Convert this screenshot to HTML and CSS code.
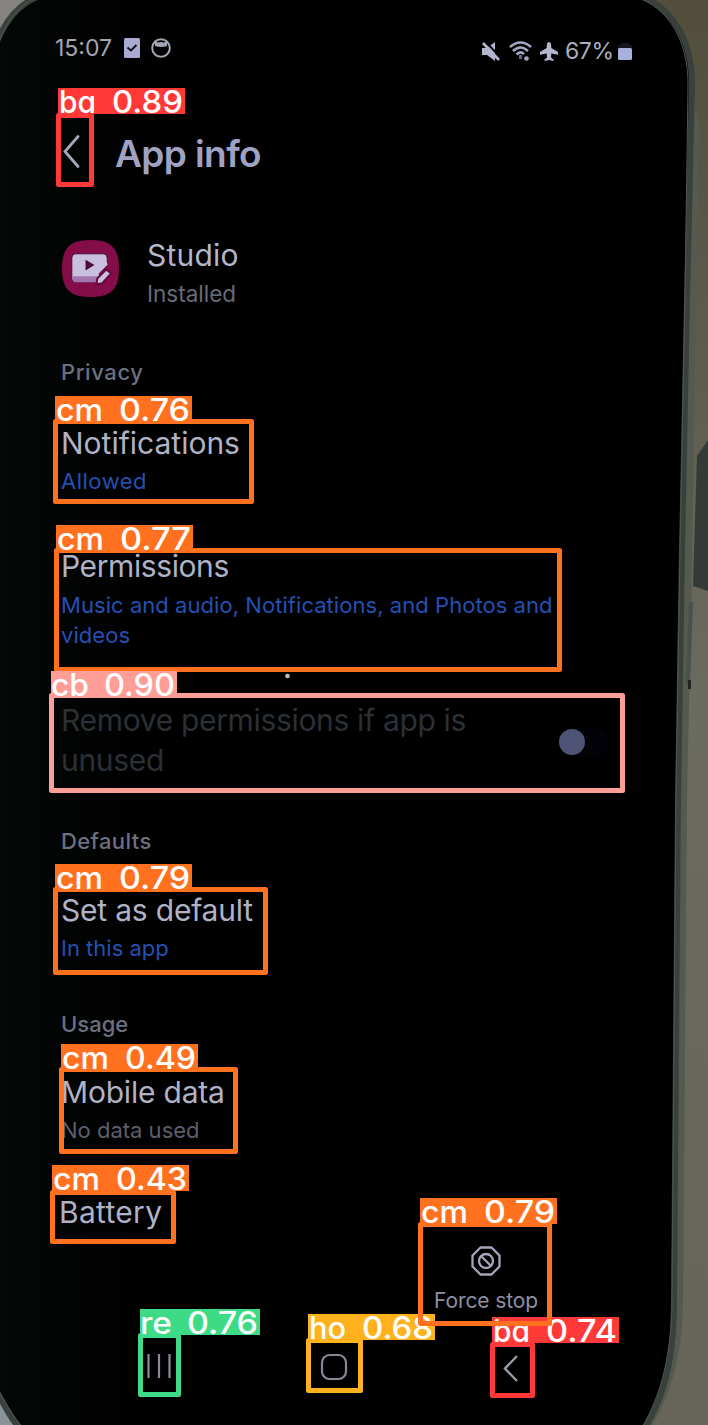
FILE: index.html
```
<!DOCTYPE html>
<html lang="en">
<head>
<meta charset="utf-8">
<title>App info</title>
<link rel="stylesheet" href="styles.css">
</head>
<body>
<svg class="backdrop" viewBox="0 0 708 1425" aria-hidden="true">
  <defs>
    <linearGradient id="wall" x1="0" y1="0" x2="0" y2="1">
      <stop offset="0" stop-color="#524e3b"/><stop offset=".2" stop-color="#5a594b"/><stop offset=".5" stop-color="#6b6b60"/><stop offset="1" stop-color="#67645a"/>
    </linearGradient>
    <linearGradient id="sheen" x1="0" y1="0" x2="1" y2="0">
      <stop offset="0" stop-color="#040807"/><stop offset=".12" stop-color="#020403"/><stop offset=".2" stop-color="#000"/>
    </linearGradient>
  </defs>
  <rect width="708" height="1425" fill="url(#wall)"/>
  <rect width="60" height="60" fill="#858480"/>
  <rect y="1370" width="60" height="55" fill="#8b939a"/>
  <path d="M708 440L697 456L693 586L708 591Z" fill="#343a36"/>
  <path d="M692 90L700 130L696 300L692 560L687 800L683 1300C683 1350 672 1395 650 1429H640L676 1300L684 500Z" fill="#555a50"/>
  <path d="M-4 44C6 18 20 3 40 -4H640C675 8 692 44 692 84L687 300L682 550L678 800L674 1300C674 1360 664 1398 644 1429H20C8 1415 2 1400 -4 1390Z" fill="url(#sheen)" stroke="#3a403b" stroke-width="6"/>
  <path d="M-4 50C6 20 20 3 40 -4H634C670 8 688 42 688 84L685 300L680 550L676 800L672 1300C672 1350 662 1395 641 1429H24C12 1415 4 1400 -4 1388Z" fill="none" stroke="#505650" stroke-width="1"/>
  <path d="M691 602L688 684" stroke="#4a504b" stroke-width="4"/>
  <path d="M689.500 680V689" stroke="#20241f" stroke-width="3"/>
</svg>

<main class="screen">
  <header class="status">
    <div class="status-left">
      <span class="clock">15:07</span>
      <svg class="i-task" viewBox="0 0 16 20"><rect width="16" height="20" rx="1.5" fill="#a9abd2"/><path d="M3.5 9.5L7 12.5L12.5 7" fill="none" stroke="#10101a" stroke-width="2"/></svg>
      <svg class="i-face" viewBox="0 0 20 20"><circle cx="10" cy="10" r="8.8" fill="none" stroke="#a2a6b4" stroke-width="2"/><path d="M4 3L7 4.5Q10 3.4 13 4.5L16 3V8Q10 10 4 8Z" fill="#a2a6b4"/></svg>
    </div>
    <div class="status-right">
      <svg class="i-mute" viewBox="0 0 18 19"><path d="M0 6H5L13 0V19L5 13H0Z" fill="#b3b6cf"/><path d="M3 -1L19 16" stroke="#000" stroke-width="2"/><path d="M1 1L17 18" stroke="#b3b6cf" stroke-width="2.6"/></svg>
      <svg class="i-wifi" viewBox="0 0 23 20" fill="none" stroke="#a5a8c4" stroke-width="2.6"><path d="M1 6Q11.500 -3 22 6"/><path d="M4 10Q11.500 3 19 10"/><path d="M7.500 13.500Q11.500 9.500 15 13"/><path d="M11.500 14V18" stroke-width="3" stroke="#666983"/><circle cx="17.500" cy="17.500" r="2.300" fill="#a5a8c4" stroke="none"/></svg>
      <svg class="i-plane" viewBox="0 0 18 19"><path d="M9 0C11 0 11.300 2 11.300 6L18 10V12.800L11.300 11.500L11 15.500L13.500 17.500V19L9 18L4.500 19V17.500L7 15.500L6.700 11.500L0 12.800V10L6.700 6C6.700 2 7 0 9 0Z" fill="#b3b6cf"/></svg>
      <span class="percent">67%</span>
      <svg class="i-batt" viewBox="0 0 14 17"><path d="M3 0H11V2H14V6H0V2H3Z" fill="#15161f"/><rect y="5" width="14" height="12" rx="1.500" fill="#a9b0dc"/></svg>
    </div>
  </header>

  <div class="titlebar">
    <svg class="i-back" viewBox="0 0 17 33"><path d="M15 1.500L2 16.500L15 31.500" fill="none" stroke="#a6a7bd" stroke-width="2.800" stroke-linecap="round"/></svg>
    <h1>App info</h1>
  </div>

  <section class="app">
    <svg class="app-icon" viewBox="0 0 58 58">
      <path d="M29 0C50 0 58 8 58 29S50 58 29 58S0 50 0 29S8 0 29 0Z" fill="#840c48"/>
      <path d="M14 14H42Q46 14 46 18V22L47 25L38 34V43H14Q10 43 10 39V18Q10 14 14 14Z" fill="#c9bfdf" stroke="#4b0b35" stroke-width="1"/>
      <path d="M10.500 37H37V43H14Q10.500 43 10.500 39Z" fill="#a377ae"/>
      <path d="M24 20L33 25.500L24 31Z" fill="#4b0b35"/>
      <path d="M36 39L45 30L50 34L41 44L35 45Z" fill="#c9bfdf" stroke="#650a3c" stroke-width="2"/>
    </svg>
    <div>
      <div class="name">Studio</div>
      <div class="state">Installed</div>
    </div>
  </section>

  <section class="privacy">
    <h2 class="t-privacy">Privacy</h2>
    <div class="row row-notif">
      <div class="label l-notif">Notifications</div>
      <div class="sub link s-allowed">Allowed</div>
    </div>
    <div class="row row-perm">
      <div class="label l-perm">Permissions</div>
      <div class="sub link s-perm">Music and audio, Notifications, and Photos and<br>videos</div>
    </div>
    <div class="row row-remove">
      <div class="label disabled">Remove permissions if app is<br>unused</div>
      <span class="toggle"><span class="knob"></span></span>
    </div>
  </section>

  <section class="defaults">
    <h2 class="t-defaults">Defaults</h2>
    <div class="row row-set">
      <div class="label l-set">Set as default</div>
      <div class="sub link s-this">In this app</div>
    </div>
  </section>

  <section class="usage">
    <h2 class="t-usage">Usage</h2>
    <div class="row row-data">
      <div class="label l-data">Mobile data</div>
      <div class="sub s-data">No data used</div>
    </div>
    <div class="row row-batt">
      <div class="label l-batt">Battery</div>
    </div>
  </section>

  <div class="actions">
    <div class="stop">
      <svg class="i-stop" viewBox="0 0 30 30" fill="none" stroke="#a5a6ba" stroke-width="2.300"><path d="M9.500 1.500H20.500L28.500 9.500V20.500L20.500 28.500H9.500L1.500 20.500V9.500Z" stroke-linejoin="round"/><circle cx="15" cy="15" r="7"/><path d="M10 10L20 20"/></svg>
      <span class="stop-text">Force stop</span>
    </div>
  </div>

  <nav class="nav">
    <svg class="n-recent" viewBox="0 0 24 26"><path d="M1.500 1V25M12 1V25M22.500 1V25" stroke="#888a98" stroke-width="2.200"/></svg>
    <svg class="n-home" viewBox="0 0 28 28"><rect x="2" y="2" width="24" height="24" rx="7.500" fill="none" stroke="#858998" stroke-width="2.200"/></svg>
    <svg class="n-back" viewBox="0 0 15 27"><path d="M14 1L2 13.500L14 26" fill="none" stroke="#9b9ca8" stroke-width="2.400"/></svg>
  </nav>
</main>

<svg class="marks" viewBox="0 0 708 1425">
  <circle cx="287.500" cy="676" r="2.300" fill="#b9bdc2"/>
  <g class="mark amber"><rect class="box" x="308.500" y="1340.500" width="52" height="50"/><rect class="tag" x="308" y="1314" width="127" height="26"/><text y="1338.500"><tspan x="309" textLength="37" lengthAdjust="spacingAndGlyphs">ho</tspan> <tspan x="362" textLength="71" lengthAdjust="spacingAndGlyphs">0.68</tspan></text></g>
  <g class="mark red"><rect class="box" x="492.500" y="1344.500" width="40" height="51"/><rect class="tag" x="492" y="1317" width="127" height="26"/><text y="1341.500"><tspan x="493" textLength="37" lengthAdjust="spacingAndGlyphs">ba</tspan> <tspan x="546" textLength="71" lengthAdjust="spacingAndGlyphs">0.74</tspan></text></g>
  <g class="mark orange"><rect class="box" x="52.500" y="1192.500" width="121" height="49"/><rect class="tag" x="52" y="1165" width="137" height="26"/><text y="1189.500"><tspan x="53" textLength="47" lengthAdjust="spacingAndGlyphs">cm</tspan> <tspan x="116" textLength="71" lengthAdjust="spacingAndGlyphs">0.43</tspan></text></g>
  <g class="mark orange"><rect class="box" x="61.500" y="1069.500" width="174" height="82"/><rect class="tag" x="61" y="1044" width="137" height="25"/><text y="1068.500"><tspan x="62" textLength="47" lengthAdjust="spacingAndGlyphs">cm</tspan> <tspan x="125" textLength="71" lengthAdjust="spacingAndGlyphs">0.49</tspan></text></g>
  <g class="mark green"><rect class="box" x="140.500" y="1335.500" width="38" height="59"/><rect class="tag" x="140" y="1309" width="120" height="26"/><text y="1333.500"><tspan x="140" textLength="32" lengthAdjust="spacingAndGlyphs">re</tspan> <tspan x="187" textLength="71" lengthAdjust="spacingAndGlyphs">0.76</tspan></text></g>
  <g class="mark orange"><rect class="box" x="55.500" y="421.500" width="196" height="80"/><rect class="tag" x="55" y="396" width="137" height="25"/><text y="420.500"><tspan x="56" textLength="47" lengthAdjust="spacingAndGlyphs">cm</tspan> <tspan x="119" textLength="71" lengthAdjust="spacingAndGlyphs">0.76</tspan></text></g>
  <g class="mark orange"><rect class="box" x="56.500" y="550.500" width="503" height="119"/><rect class="tag" x="56" y="525" width="137" height="25"/><text y="549.500"><tspan x="57" textLength="47" lengthAdjust="spacingAndGlyphs">cm</tspan> <tspan x="120" textLength="71" lengthAdjust="spacingAndGlyphs">0.77</tspan></text></g>
  <g class="mark orange"><rect class="box" x="55.500" y="889.500" width="210" height="83"/><rect class="tag" x="55" y="864" width="137" height="25"/><text y="888.500"><tspan x="56" textLength="47" lengthAdjust="spacingAndGlyphs">cm</tspan> <tspan x="119" textLength="71" lengthAdjust="spacingAndGlyphs">0.79</tspan></text></g>
  <g class="mark orange"><rect class="box" x="420.500" y="1224.500" width="129" height="99"/><rect class="tag" x="420" y="1198" width="137" height="26"/><text y="1222.500"><tspan x="421" textLength="47" lengthAdjust="spacingAndGlyphs">cm</tspan> <tspan x="484" textLength="71" lengthAdjust="spacingAndGlyphs">0.79</tspan></text></g>
  <g class="mark red"><rect class="box" x="58.500" y="115.500" width="33" height="69"/><rect class="tag" x="58" y="88" width="127" height="26"/><text y="112.500"><tspan x="59" textLength="37" lengthAdjust="spacingAndGlyphs">ba</tspan> <tspan x="112" textLength="71" lengthAdjust="spacingAndGlyphs">0.89</tspan></text></g>
  <g class="mark pink"><rect class="box" x="51.500" y="695.500" width="571" height="95"/><rect class="tag" x="51" y="671" width="126" height="25"/><text y="695.500"><tspan x="51" textLength="38" lengthAdjust="spacingAndGlyphs">cb</tspan> <tspan x="104" textLength="71" lengthAdjust="spacingAndGlyphs">0.90</tspan></text></g>
</svg>
</body>
</html>
```
FILE: styles.css
```
body {
  margin: 0;
  width: 708px;
  height: 1425px;
  position: relative;
  overflow: hidden;
  background: #000;
  font-family: Inter, Roboto, sans-serif;
  font-weight: 400;
}
svg { display: block; flex: none; }
h1, h2 { margin: 0; }

.backdrop, .marks {
  position: absolute;
  left: 0;
  top: 0;
  width: 708px;
  height: 1425px;
}
.screen {
  position: relative;
  display: flex;
  flex-direction: column;
  height: 1425px;
  box-sizing: border-box;
  padding: 0 76px 0 61px;
  white-space: nowrap;
}

/* status bar */
.status { display: flex; justify-content: space-between; height: 131px; margin-left: -6px; }
.status-left, .status-right { display: flex; align-items: center; height: 26px; }
.status-left { padding-top: 35px; }
.status-right { padding-top: 38px; }
.clock { font-size: 23px; line-height: 26px; width: 69px; color: #a4a7b0; }
.percent { font-size: 23px; line-height: 26px; width: 53px; color: #a9acbb; letter-spacing: -0.4px; }
.i-task { width: 16px; height: 20px; margin-right: 11px; }
.i-face { width: 20px; height: 20px; }
.i-mute { width: 18px; height: 19px; margin-right: 9px; }
.i-wifi { width: 23px; height: 20px; margin-right: 8px; }
.i-plane { width: 18px; height: 19px; margin-right: 7px; }
.i-batt { width: 14px; height: 17px; }

/* title */
.titlebar { display: flex; height: 44px; }
.i-back { width: 17px; height: 33px; margin: 4px 35px 0 2px; }
h1 { font-size: 37px; line-height: 46px; font-weight: 600; color: #a0a2c4; letter-spacing: -0.6px; }

/* app summary */
.app { display: flex; margin-top: 62px; height: 70px; }
.app-icon { width: 57px; height: 59px; margin: 2px 28px 0 1px; }
.name { font-size: 30px; line-height: 36px; color: #b4b6c8; letter-spacing: 0.2px; }
.state { font-size: 22.5px; line-height: 26px; margin-top: 8px; color: #686b77; }

/* settings */
h2 { font-size: 22px; line-height: 26px; font-weight: 500; color: #6c7080; }
.t-privacy { letter-spacing: 0.6px; }
.t-defaults { letter-spacing: 0.4px; }
.label { font-size: 30px; line-height: 36px; color: #b0b2c6; }
.l-perm { letter-spacing: -0.4px; }
.l-set { letter-spacing: -0.2px; }
.l-data { letter-spacing: -0.2px; }
.l-batt { letter-spacing: 0.3px; margin-left: -2px; }
.sub { font-size: 22px; line-height: 26px; color: #5c5e6b; }
.link { color: #2450b4; }
.s-allowed { letter-spacing: 0.5px; }

.privacy { margin-top: 52px; }
.row-notif { margin-top: 40px; }
.row-notif .sub { margin-top: 7px; }
.row-perm { margin-top: 54px; }
.row-perm .sub { line-height: 30px; margin-top: 6px; letter-spacing: 0.05px; }
.row-remove { display: flex; justify-content: space-between; align-items: center; height: 80px; margin-top: 50px; }
.disabled { line-height: 40px; color: #2b3036; letter-spacing: -0.33px; }
.toggle { width: 50px; height: 28px; margin: 3px 23px 0 0; border-radius: 14px; background: #020208; }
.knob { display: block; width: 26px; height: 26px; margin: 1px 0 0 0; border-radius: 50%; background: #4f5375; }

.defaults { margin-top: 48px; }
.row-set { margin-top: 38px; }
.row-set .sub, .row-data .sub { margin-top: 7px; }
.usage { margin-top: 50px; }
.row-data { margin-top: 37px; }
.row-batt { margin-top: 51px; }

/* bottom */
.actions { display: flex; justify-content: flex-end; margin-top: 16px; height: 67px; }
.stop { width: 130px; margin-right: 81px; display: flex; flex-direction: column; align-items: center; }
.i-stop { width: 30px; height: 30px; }
.stop-text { font-size: 21px; line-height: 26px; margin-top: 12px; letter-spacing: -0.1px; color: #8d8fa5; }
.nav { display: flex; margin-top: 40px; }
.n-recent { width: 24px; height: 26px; margin-left: 86px; }
.n-home { width: 28px; height: 28px; margin-left: 149px; }
.n-back { width: 15px; height: 27px; margin: 2px 0 0 155px; }

/* detection overlay */
.box { fill: none; stroke: var(--c); stroke-width: 5; stroke-linejoin: round; }
.tag { fill: var(--c); }
.mark text { fill: #fff; font-size: 31px; font-weight: 500; font-feature-settings: "cv11"; }
.red { --c: #ff3838; }
.orange { --c: #ff701f; }
.amber { --c: #ffb21d; }
.green { --c: #3ddb86; }
.pink { --c: #ff9d97; }
```
